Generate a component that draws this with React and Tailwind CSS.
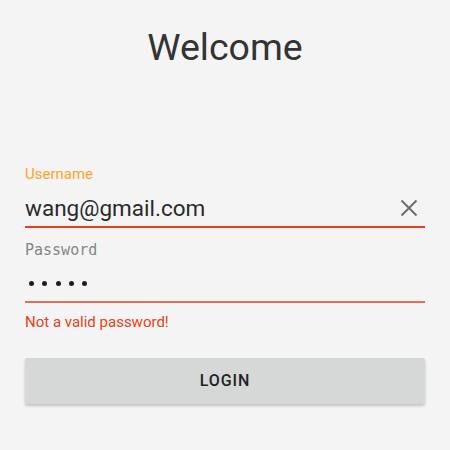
export default function App() {
  return (
    <div className="w-[450px] h-[450px] bg-[#f4f4f4] px-[25px] overflow-hidden" style={{ fontFamily: "Roboto, 'Liberation Sans', sans-serif" }}>
      <div className="pt-[29px] text-center text-[37.5px] leading-none text-[#333333]">Welcome</div>
      <div className="mt-[100px] text-[15px] leading-none text-[#ffa42b]">Username</div>
      <div className="mt-[16px] flex items-center justify-between h-[22px]">
        <span className="text-[22.5px] leading-none text-[#2a2a2a]">wang@gmail.com</span>
        <svg width="18" height="18" viewBox="0 0 18 18" className="mr-[7px] mt-[-2px]">
          <path d="M1.5 1.5 L16.5 16.5 M16.5 1.5 L1.5 16.5" stroke="#6e6e6e" strokeWidth="2" fill="none" />
        </svg>
      </div>
      <div className="mt-[6px] h-[2px] bg-[#e8401c]" />
      <div className="mt-[15px] text-[15px] leading-none text-[#858585]" style={{ fontFamily: "'DejaVu Sans Mono', monospace" }}>Password</div>
      <div className="mt-[23px] flex gap-[8.3px] pl-[4px]">
        <div className="w-[5px] h-[5px] rounded-full bg-[#1e1e1e]" />
        <div className="w-[5px] h-[5px] rounded-full bg-[#1e1e1e]" />
        <div className="w-[5px] h-[5px] rounded-full bg-[#1e1e1e]" />
        <div className="w-[5px] h-[5px] rounded-full bg-[#1e1e1e]" />
        <div className="w-[5px] h-[5px] rounded-full bg-[#1e1e1e]" />
      </div>
      <div className="mt-[15px] h-[2px] bg-[#ea6f52]" />
      <div className="mt-[12px] text-[15px] leading-none text-[#e8401c]">Not a valid password!</div>
      <div className="mt-[28px] h-[46px] rounded-[2px] bg-[#d6d7d7] shadow-[0_2px_3px_rgba(0,0,0,0.2)] flex items-center justify-center text-[16px] tracking-[0.06em] font-medium text-[#222222]">LOGIN</div>
    </div>
  );
}
